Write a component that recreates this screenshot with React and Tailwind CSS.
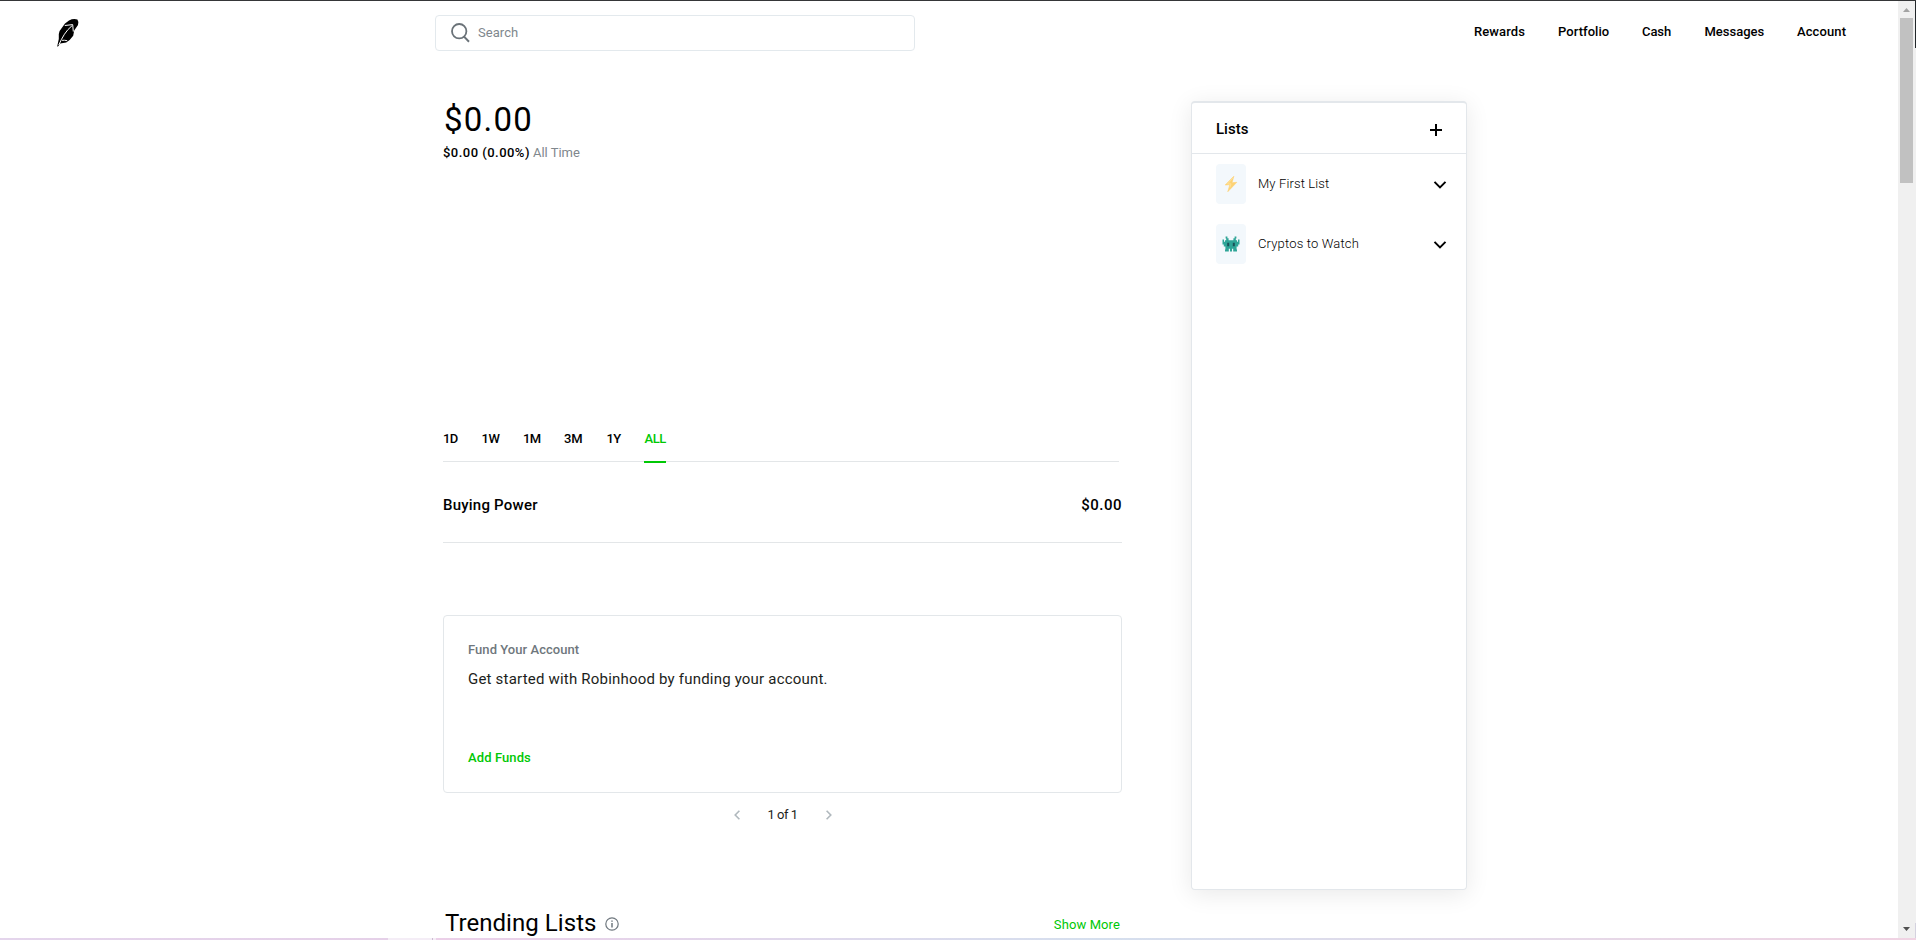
const navItems = [
  { label: "Rewards", cls: "w-[84px] tracking-[0.1px]" },
  { label: "Portfolio", cls: "w-[84px] tracking-[0.05px]" },
  { label: "Cash", cls: "w-[62.5px] tracking-[-0.1px]" },
  { label: "Messages", cls: "w-[92.5px] tracking-[0px]" },
  { label: "Account", cls: "w-[50px] tracking-[0.1px]" },
];

const ranges = [
  { label: "1D", cls: "w-[38.5px] tracking-[-0.7px]" },
  { label: "1W", cls: "w-[41.5px] tracking-[-0.4px]" },
  { label: "1M", cls: "w-[41px] tracking-[-0.7px]" },
  { label: "3M", cls: "w-[42.5px] tracking-[-0.2px]" },
  { label: "1Y", cls: "w-[37.5px] tracking-[-0.7px]" },
];

function Feather() {
  return (
    <svg className="h-[30px] w-[22px]" viewBox="0 0 22 30">
      <path d="M1 29.6 L.2 29.4 1.8 22 1.8 17 2.6 14 8 6.6 12 3.4 Q16 1.4 20.4 2.4 Q22 4.4 21 8 L17.2 13.4 16.2 18.7 Q13.2 23 9.2 25.6 L3.2 26.6Z" fill="#000" />
      <path d="M1.8 28 C5.2 20.2 9 13.6 15 8.7 M7.8 8.5 L15.7 7.6 16.3 14.6 M5 23.3 Q7.5 23 10.2 23.7" fill="none" stroke="#fff" strokeWidth="1" />
    </svg>
  );
}

function SearchIcon() {
  return (
    <svg className="h-[20px] w-[19px]" viewBox="0 0 19 20" fill="none" stroke="#6a7278" strokeWidth="1.8">
      <circle cx="8.2" cy="8.2" r="7.2" />
      <path d="M12.8 13.4 L18 18.7" strokeWidth="2" />
    </svg>
  );
}

function Chevron() {
  return (
    <svg className="h-2 w-3.5" viewBox="0 0 14 8" fill="none" stroke="#000" strokeWidth="2">
      <path d="M1.5 .9 7 6.4 12.5 .9" />
    </svg>
  );
}

function Bolt() {
  return (
    <svg className="h-4 w-3.5" viewBox="0 0 14 16">
      <path d="M9.8 .3 1.2 9 5.8 8.7 3.8 15.7 12.8 6.3 8 6.7Z" fill="#fdd274" stroke="#fdd274" strokeWidth=".6" strokeLinejoin="round" />
      <path d="M8.9 2 3.5 8 7 7.8 6 11.5" fill="none" stroke="#ffe5a0" strokeWidth=".8" />
    </svg>
  );
}

function Invader() {
  return (
    <svg className="h-4 w-[18px]" viewBox="0 0 18 16">
      <path
        d="M3.6 .5H5.4V2.2H6.6V4.2H11.4V2.2H12.6V.5H14.4V2.4H13.8V4.2H15V5.8H16V3.4H17.5V8.6H16.2V10.4H14.6V13.6H15V15.5H11.2V12.8H10V15.5H8V12.8H6.8V15.5H3V13.6H3.4V10.4H1.8V8.6H.5V3.4H2V5.8H3V4.2H4.2V2.4H3.6Z"
        fill="#2fa597"
      />
      <path d="M5.2 6.8h2v3.4h-2zM10.8 6.8h2v3.4h-2z" fill="#1b5158" />
    </svg>
  );
}

function ListRow({ icon, label, cls }) {
  return (
    <div className="flex h-[60px] items-center pl-6 pr-[19px]">
      <div className="flex h-10 w-[30px] items-center justify-center rounded-[4px] bg-[#f3f8fc]">{icon}</div>
      <div className={"ml-3 text-[13px] font-light leading-5 text-black " + cls}>{label}</div>
      <div className="ml-auto pt-[2px]"><Chevron /></div>
    </div>
  );
}

function ListsPanel() {
  return (
    <aside className="mt-[46px] h-[789px] w-[276px] rounded-[4px] border border-t-2 border-[#e3e7eb] bg-white shadow-[0_4px_24px_rgba(0,0,0,0.09)]">
      <div className="flex h-[51px] items-center border-b border-[#e3e7eb] pl-6 pr-6">
        <h2 className="mt-[2px] text-[15px] font-medium leading-5 tracking-[0px]">Lists</h2>
        <svg className="mt-[3px] ml-auto h-3 w-3" viewBox="0 0 12 12" stroke="#000" strokeWidth="2">
          <path d="M6 0V12M0 6H12" />
        </svg>
      </div>
      <ListRow icon={<Bolt />} label="My First List" cls="tracking-[0.12px]" />
      <ListRow icon={<Invader />} label="Cryptos to Watch" cls="tracking-[0.16px]" />
    </aside>
  );
}

function Header() {
  return (
    <header className="flex h-[54px] shrink-0 items-start">
      <div className="w-[435px] pl-[56.5px] pt-[16px]"><Feather /></div>
      <div className="mt-[14px] flex h-9 w-[480px] items-center rounded-[4px] border border-[#e3e9ed] pl-[15px]">
        <SearchIcon />
        <span className="ml-2 text-[13px] leading-5 tracking-[0.05px] text-[#80878d]">Search</span>
      </div>
      <nav className="ml-[559px] flex pt-[21px]">
        {navItems.map((n) => (
          <a key={n.label} className={"shrink-0 whitespace-nowrap text-[13px] font-medium leading-5 " + n.cls}>{n.label}</a>
        ))}
      </nav>
    </header>
  );
}

function Portfolio() {
  return (
    <main className="w-[679px] shrink-0">
      <div className="mt-[44px] h-[40px] pl-px text-[33px] leading-[41px] tracking-[1.2px]">$0.00</div>
      <div className="mt-1 flex h-5 gap-[3px] text-[13px] leading-5">
        <span className="font-medium tracking-[0.47px]">$0.00 (0.00%)</span>
        <span className="tracking-[0px] text-[#80878d]">All Time</span>
      </div>
      <div className="mt-[260px] flex h-[39px] w-[676px] border-b border-[#e3e6e8] pt-1.5 text-[13px] font-medium leading-5">
        {ranges.map((r) => (
          <div key={r.label} className={r.cls}>{r.label}</div>
        ))}
        <div className="-mb-[2px] -mt-1.5 h-[40px] w-[22px] border-b-2 border-[#00c805] pl-[0.5px] pt-1.5 tracking-[-0.4px] text-[#00c805]">ALL</div>
      </div>
      <div className="flex h-[81px] items-center justify-between border-b border-[#e3e6e8] pt-[7px] text-[15px] font-medium">
        <span className="tracking-[0.22px]">Buying Power</span>
        <span className="tracking-[0.5px]">$0.00</span>
      </div>
      <section className="mt-[72px] h-[178px] rounded-[4px] border border-[#e3e7ea] px-6 pt-6">
        <div className="text-[13px] font-medium leading-5 tracking-[0.05px] text-[#6f777d]">Fund Your Account</div>
        <div className="mt-2 text-[15px] leading-[22px] tracking-[0.2px] text-[#1c1e20]">Get started with Robinhood by funding your account.</div>
        <div className="mt-[58px] text-[13px] font-medium leading-5 tracking-[0.1px] text-[#00c805]">Add Funds</div>
      </section>
      <div className="mt-3 flex h-5 items-center justify-center gap-7 text-[13px] leading-5">
        <svg className="h-2.5 w-1.5" viewBox="0 0 6 10" fill="none" stroke="#b0b8bd" strokeWidth="1.6"><path d="M5.4 .7 1.2 5 5.4 9.3" /></svg>
        <span className="tracking-[-0.5px] text-[#1c1e20]">1 of 1</span>
        <svg className="h-2.5 w-1.5" viewBox="0 0 6 10" fill="none" stroke="#b0b8bd" strokeWidth="1.6"><path d="M.6 .7 4.8 5 .6 9.3" /></svg>
      </div>
      <div className="mt-[82px] flex h-8 items-center pl-[2px] pr-[2px]">
        <h2 className="text-[24px] leading-8 tracking-[0.05px]">Trending Lists</h2>
        <svg className="ml-[9px] mt-[2px] h-3.5 w-3.5" viewBox="0 0 14 14" fill="none" stroke="#6f787f" strokeWidth="1.2">
          <circle cx="7" cy="7" r="6.2" />
          <path d="M7 6V10.5M7 3.4V4.7" strokeWidth="1.5" />
        </svg>
        <span className="ml-auto mt-1 text-[13px] leading-5 tracking-[0.1px] text-[#00c805]">Show More</span>
      </div>
    </main>
  );
}

function Scrollbar() {
  return (
    <div className="flex w-[17px] shrink-0 flex-col items-center bg-[#f0f0f0]">
      <svg className="mt-[7px] h-1 w-[7px]" viewBox="0 0 7 4"><path d="M3.5 0 7 4H0Z" fill="#a3a3a3" /></svg>
      <div className="mt-[6px] h-[165px] w-[13px] bg-[#c1c1c1]" />
      <svg className="mb-[7px] mt-auto h-1 w-[7px]" viewBox="0 0 7 4"><path d="M0 0H7L3.5 4Z" fill="#505050" /></svg>
    </div>
  );
}

export default function App() {
  return (
    <div className="flex h-[940px] w-[1916px] flex-col overflow-hidden bg-white font-['Roboto',sans-serif] text-black">
      <div className="h-px shrink-0 bg-[#353638]" />
      <div className="flex h-[937px] shrink-0">
        <div className="flex w-[1898px] shrink-0 flex-col overflow-hidden">
          <Header />
          <div className="flex items-start gap-[69px] pl-[443px]">
            <Portfolio />
            <ListsPanel />
          </div>
        </div>
        <Scrollbar />
        <div className="flex w-px flex-col bg-[#f0f0f0]">
          <div className="h-[47px] bg-[#22272a]" />
          <div className="mt-auto h-[15px] bg-[#d4d2df]" />
        </div>
      </div>
      <div className="flex h-[2px] shrink-0">
        <div className="w-[388px] bg-linear-to-r from-[#e4d5ec] to-[#e5d0e8]" />
        <div className="w-[44px] bg-[#f4edf6]" />
        <div className="w-px bg-[#cdbbd1]" />
        <div className="w-[3px] bg-[#f4edf6]" />
        <div className="flex-1 bg-linear-to-r from-[#ebcfe8] via-[#d5dfee] via-45% to-[#f0d3e3]" />
      </div>
    </div>
  );
}
